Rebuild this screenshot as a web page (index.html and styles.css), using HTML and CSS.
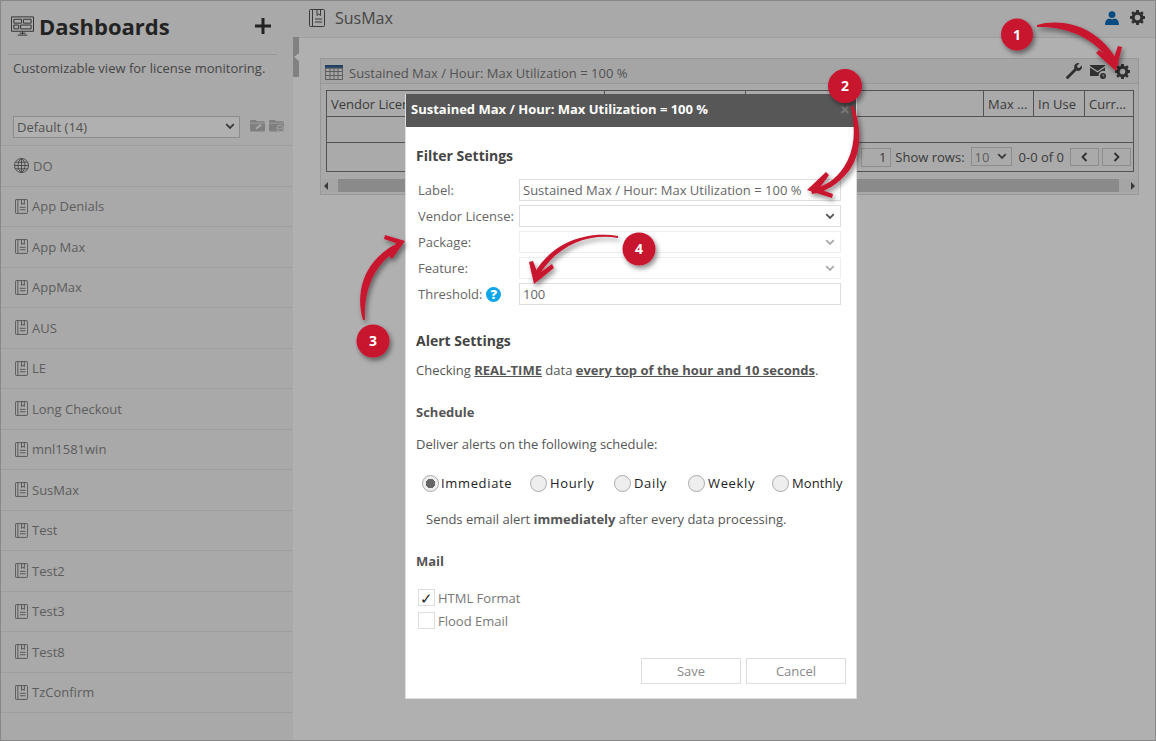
FILE: index.html
```html
<!DOCTYPE html>
<html lang="en">
<head>
<meta charset="utf-8">
<title>SusMax</title>
<link rel="stylesheet" href="styles.css">
</head>
<body>
<svg class="defs" width="0" height="0" aria-hidden="true">
  <symbol id="i-report" viewBox="0 0 16 18">
    <path d="M3.500.5h11a1 1 0 0 1 1 1v15a1 1 0 0 1-1 1h-11zM3.500.5h-2a1 1 0 0 0-1 1v15a1 1 0 0 0 1 1h2" fill="none" stroke="currentColor"/>
    <path d="M8 .5v6l1.750-1.500 1.750 1.500v-6" fill="none" stroke="currentColor"/>
    <path d="M6 10h7M6 13h7" stroke="currentColor" fill="none"/>
  </symbol>
  <symbol id="i-gear" viewBox="0 0 16 16">
    <path fill="currentColor" fill-rule="evenodd" d="M6.600 0h2.800l.4 2.100 1.300.55L12.900 1.400l1.700 1.700-1.250 1.800.55 1.300 2.100.4v2.800l-2.100.4-.55 1.300 1.250 1.800-1.700 1.700-1.800-1.250-1.300.55-.4 2.100H6.600l-.4-2.100-1.300-.55-1.800 1.250-1.700-1.700 1.250-1.800-.55-1.300L0 9.400V6.600l2.100-.4.550-1.300L1.400 3.100l1.700-1.700 1.800 1.250 1.300-.55zM8 5a3 3 0 1 0 0 6 3 3 0 0 0 0-6z"/>
  </symbol>
  <symbol id="i-chev" viewBox="0 0 10 7">
    <path d="M1.200 1.200 5 5l3.800-3.800" fill="none" stroke="currentColor" stroke-width="1.800"/>
  </symbol>
</svg>

<div class="app">
  <aside class="sidebar">
    <header class="side-head">
      <svg class="dash-icon" viewBox="0 0 24 20"><path d="M.5.500h23v15H.5zM3 3h8v4H3zM13 3h8v4h-8zM3 9h5v4H3zM10 9h11v4H10zM9 17.500h6M7 19.500h10M12 15.500v3" fill="none" stroke="currentColor"/></svg>
      <h1 class="side-title">Dashboards</h1>
      <svg class="plus" viewBox="0 0 16 16"><path d="M8 0v16M0 8h16" stroke="currentColor" stroke-width="3"/></svg>
    </header>
    <p class="side-desc">Customizable view for license monitoring.</p>
    <div class="side-filter">
      <div class="side-select"><span>Default (14)</span><svg class="chev"><use href="#i-chev"/></svg></div>
      <svg class="folder" viewBox="0 0 16 13"><path fill="currentColor" d="M0 1.500 1 .5h5l1.500 1.500H15l1 1v9l-1 1H1l-1-1z"/><path d="M0 4h16" stroke="#f5f5f5" stroke-width=".8"/><path d="M6 10.500l.5-2L11 5l1.500 1.500L8 10z" fill="#f5f5f5"/></svg>
      <svg class="folder" viewBox="0 0 16 13"><path fill="currentColor" d="M0 1.500 1 .5h5l1.500 1.500H15l1 1v9l-1 1H1l-1-1z"/><path d="M0 4h16" stroke="#f5f5f5" stroke-width=".8"/><circle cx="12" cy="9.500" r="3.500" fill="currentColor" stroke="#f5f5f5"/><path d="M10 9.500h4" stroke="#f5f5f5"/></svg>
    </div>
    <nav class="side-list">
      <a class="side-item"><svg class="item-icon" viewBox="0 0 16 16"><circle cx="8" cy="8" r="7.500" fill="none" stroke="currentColor"/><path d="M.5 8h15M1.500 4.500h13M1.500 11.500h13M8 .5v15M8 .5C3 4 3 12 8 15.500M8 .5c5 3.500 5 11.500 0 15" fill="none" stroke="currentColor"/></svg>DO</a>
      <a class="side-item"><svg class="item-icon rep"><use href="#i-report"/></svg>App Denials</a>
      <a class="side-item"><svg class="item-icon rep"><use href="#i-report"/></svg>App Max</a>
      <a class="side-item"><svg class="item-icon rep"><use href="#i-report"/></svg>AppMax</a>
      <a class="side-item"><svg class="item-icon rep"><use href="#i-report"/></svg>AUS</a>
      <a class="side-item"><svg class="item-icon rep"><use href="#i-report"/></svg>LE</a>
      <a class="side-item"><svg class="item-icon rep"><use href="#i-report"/></svg>Long Checkout</a>
      <a class="side-item"><svg class="item-icon rep"><use href="#i-report"/></svg>mnl1581win</a>
      <a class="side-item"><svg class="item-icon rep"><use href="#i-report"/></svg>SusMax</a>
      <a class="side-item"><svg class="item-icon rep"><use href="#i-report"/></svg>Test</a>
      <a class="side-item"><svg class="item-icon rep"><use href="#i-report"/></svg>Test2</a>
      <a class="side-item"><svg class="item-icon rep"><use href="#i-report"/></svg>Test3</a>
      <a class="side-item"><svg class="item-icon rep"><use href="#i-report"/></svg>Test8</a>
      <a class="side-item"><svg class="item-icon rep"><use href="#i-report"/></svg>TzConfirm</a>
    </nav>
  </aside>
  <div class="splitter"><div class="split-handle"><i class="split-arrow"></i></div></div>
  <main class="main">
    <header class="main-head">
      <svg class="main-icon"><use href="#i-report"/></svg>
      <h2 class="main-title">SusMax</h2>
      <svg class="user-icon" viewBox="0 0 14 14"><circle cx="7" cy="3.600" r="3.400" fill="currentColor"/><path fill="currentColor" d="M0 14c0-4 1.500-6 4-6.500 1.800 1 4.200 1 6 0 2.500.5 4 2.500 4 6.500z"/></svg>
      <svg class="gear-icon"><use href="#i-gear"/></svg>
    </header>
    <div class="content">
      <section class="panel">
        <header class="panel-head">
          <svg class="table-icon" viewBox="0 0 18 15"><path d="M0 0h18v3.500H0z" fill="#2f5f8f"/><path d="M.5 3h17v11.500H.5zM.5 6.500h17M.5 10.500h17M5 3v11.500M9 3v11.500M13 3v11.500" fill="none" stroke="#888"/></svg>
          <span class="panel-title">Sustained Max / Hour: Max Utilization = 100 %</span>
          <svg class="tool wrench" viewBox="0 0 16 16"><path fill="currentColor" d="M12 0a4 4 0 0 1 1.500.3L11 2.800l.4 1.800 1.800.4L15.700 2.500A4 4 0 0 1 10.500 7.600L2.500 15.600a1.400 1.400 0 0 1-2-2L8.500 5.500A4 4 0 0 1 12 0z"/></svg>
          <svg class="tool" viewBox="0 0 16 15"><path fill="currentColor" d="M0 1h15v1L7.500 7 0 2zM0 3.500l7.500 5 7.500-5V7a5 5 0 0 0-6.500 5H0z"/><circle cx="13" cy="12" r="3" fill="currentColor"/><path d="M13 10.500V12h1.300" stroke="#f0f0f0" fill="none" stroke-width=".8"/></svg>
          <svg class="tool gear-sm"><use href="#i-gear"/></svg>
        </header>
        <div class="grid-wrap">
          <div class="grid-row grid-head">
            <span class="col c1">Vendor Licen</span><span class="col c2"></span><span class="col c3"></span>
            <span class="col c4">Max ...</span><span class="col c5">In Use</span><span class="col c6">Curr...</span>
          </div>
          <div class="grid-row grid-empty"></div>
          <div class="grid-foot">
            <span class="page-box">1</span>
            <span class="foot-label">Show rows:</span>
            <span class="rows-box">10<svg class="chev"><use href="#i-chev"/></svg></span>
            <span class="foot-count">0-0 of 0</span>
            <span class="page-btn"><svg viewBox="0 0 7 10"><path d="M5.500 1 1.500 5l4 4" fill="none" stroke="currentColor" stroke-width="1.800"/></svg></span>
            <span class="page-btn"><svg viewBox="0 0 7 10"><path d="M1.500 1l4 4-4 4" fill="none" stroke="currentColor" stroke-width="1.800"/></svg></span>
          </div>
        </div>
        <div class="hscroll">
          <i class="tri-left"></i>
          <div class="thumb"></div>
          <i class="tri-right"></i>
        </div>
      </section>
    </div>
  </main>
  <div class="overlay"></div>

  <div class="modal">
    <header class="modal-head">
      <span class="modal-title">Sustained Max / Hour: Max Utilization = 100 %</span>
      <span class="modal-close">×</span>
    </header>
    <div class="modal-body">
      <h3 class="section-title">Filter Settings</h3>
      <div class="form">
        <label class="f-label">Label:</label><div class="f-input">Sustained Max / Hour: Max Utilization = 100 %</div>
        <label class="f-label">Vendor License:</label><div class="f-input f-select"><svg class="chev"><use href="#i-chev"/></svg></div>
        <label class="f-label">Package:</label><div class="f-input f-select off"><svg class="chev"><use href="#i-chev"/></svg></div>
        <label class="f-label">Feature:</label><div class="f-input f-select off"><svg class="chev"><use href="#i-chev"/></svg></div>
        <label class="f-label">Threshold: <span class="help">?</span></label><div class="f-input">100</div>
      </div>
      <h3 class="section-title alert">Alert Settings</h3>
      <p class="check-line">Checking <b><u>REAL-TIME</u></b> data <b><u>every top of the hour and 10 seconds</u></b>.</p>
      <h4 class="sub-title sched">Schedule</h4>
      <p class="deliver">Deliver alerts on the following schedule:</p>
      <div class="radios">
        <span class="radio r1 on"><i></i>Immediate</span>
        <span class="radio r2"><i></i>Hourly</span>
        <span class="radio r3"><i></i>Daily</span>
        <span class="radio r4"><i></i>Weekly</span>
        <span class="radio r5"><i></i>Monthly</span>
      </div>
      <p class="sends">Sends email alert <b>immediately</b> after every data processing.</p>
      <h4 class="sub-title mail">Mail</h4>
      <div class="checks">
        <span class="check"><i>✓</i>HTML Format</span>
        <span class="check"><i></i>Flood Email</span>
      </div>
      <div class="actions">
        <span class="btn">Save</span>
        <span class="btn">Cancel</span>
      </div>
    </div>
  </div>

  <svg class="notes" viewBox="0 0 1156 741">
    <defs>
      <filter id="sh" x="-30%" y="-30%" width="170%" height="170%"><feDropShadow dx="2" dy="3" stdDeviation="2.500" flood-color="#000" flood-opacity=".45"/></filter>
    </defs>
    <g filter="url(#sh)" fill="#c8142f">
      <path d="M1037 25C1062 18 1099 25 1119 64L1113 67C1096 35 1062 26 1037 27z"/>
      <path d="M1116 71 1096 53 1099 50 1113 60 1118 46 1122 47z"/>
      <path d="M853 105C863 130 861 156 848 172 838 184 826 192 812 194L811 189C825 187 836 179 844 167 855 150 856 130 851 107z"/>
      <path d="M807 190 826 172 829 175 819 189 833 194 832 198z"/>
      <path d="M363 320C356 295 361 264 394 245L397 250C370 268 364 295 365 320z"/>
      <path d="M405 241 385 235 384 239 396 243 389 256 392 259z"/>
      <path d="M618 238C590 233 557 244 538 277L534 274C553 240 590 231 618 236z"/>
      <path d="M534 284 529 262 533 261 538 274 552 264 554 268z"/>
      <circle cx="1017" cy="34.500" r="16"/>
      <circle cx="845" cy="86" r="17"/>
      <circle cx="373" cy="341" r="16.500"/>
      <circle cx="639" cy="249" r="16.500"/>
    </g>
    <g class="note-num">
      <text x="1017" y="40">1</text>
      <text x="845" y="91">2</text>
      <text x="373" y="346">3</text>
      <text x="639" y="254">4</text>
    </g>
  </svg>
</div>
</body>
</html>
```

FILE: styles.css
```css
* { box-sizing: border-box; }
html, body { margin: 0; padding: 0; }
body { width: 1156px; height: 741px; overflow: hidden; font: 13px "Open Sans", "Liberation Sans", sans-serif; color: #666; background: #fff; }
.defs { position: absolute; }
h1, h2, h3, h4, p { margin: 0; }

.app { position: relative; display: flex; width: 1156px; height: 741px; border: 1px solid #888; overflow: hidden; }

.chev { width: 10px; height: 7px; color: #555; flex: none; }

/* sidebar */
.sidebar { width: 292px; flex: none; background: #f5f5f5; display: flex; flex-direction: column; }
.side-head { display: flex; align-items: center; height: 54px; margin: 0 16px 0 7px; padding: 0 3px 3px; border-bottom: 1px solid #ddd; }
.dash-icon { width: 23px; height: 20px; color: #444; margin-right: 5px; flex: none; }
.side-title { font-size: 22px; font-weight: 700; color: #333; line-height: 50px; flex: 1; }
.plus { width: 16px; height: 16px; color: #333; margin: 0 3px 0 0; }
.side-desc { padding: 4px 0 0 12px; line-height: 19px; color: #666; }
.side-filter { display: flex; align-items: center; margin-top: 37px; padding-left: 12px; height: 23px; }
.side-select { display: flex; align-items: center; justify-content: space-between; width: 227px; height: 22px; padding: 0 4px 0 3px; border: 1px solid #ccc; background: #fff; color: #777; }
.folder { width: 15px; height: 13px; color: #b8b8b8; margin: -2px 0 0 4px; }
.side-select + .folder { margin-left: 10px; }
.side-list { margin-top: 7px; border-top: 1px solid #e4e4e4; }
.side-item { display: flex; align-items: center; height: 40.5px; padding-left: 13px; border-bottom: 1px solid #e4e4e4; color: #888; }
.item-icon { width: 15px; height: 15px; margin-right: 4px; color: #666; flex: none; }
.item-icon.rep { width: 13px; height: 15px; margin: 0 4px 0 1px; }

/* splitter */
.splitter { width: 6px; flex: none; background: linear-gradient(#f5f5f5 36px, #fff 36px); padding-top: 36px; }
.split-handle { position: relative; height: 40px; background: #bbb; display: flex; align-items: center; justify-content: center; }
.split-arrow { width: 0; height: 0; border: 4px solid transparent; border-right: 5px solid #fff; border-left: 0; }

/* main */
.main { flex: 1; min-width: 0; background: #fff; display: flex; flex-direction: column; }
.main-head { display: flex; align-items: center; height: 37px; padding: 0 10px; background: #f5f5f5; border-bottom: 1px solid #e4e4e4; }
.main-icon { width: 16px; height: 18px; color: #555; margin: -3px 10px 0 0; }
.main-title { flex: 1; font-size: 16px; font-weight: 400; color: #666; margin-top: -3px; }
.user-icon { width: 14px; height: 14px; color: #0a6ebd; margin: -2px 11px 0 0; }
.gear-icon { width: 15px; height: 15px; color: #444; margin-top: -3px; }

.content { padding: 20px 16px 0 21px; }
.panel { height: 137px; border: 1px solid #ddd; background: #f5f5f5; }
.panel-head { display: flex; align-items: center; height: 25px; padding: 3px 8px 0 4px; background: #f0f0f0; border-bottom: 1px solid #ddd; }
.table-icon { width: 18px; height: 15px; margin-right: 6px; }
.panel-title { flex: 1; color: #777; }
.tool { width: 16px; height: 15px; color: #444; margin: -3px 0 0 8px; }
.wrench { height: 16px; }
.gear-sm { width: 15px; height: 15px; margin-left: 9px; }

.grid-wrap { margin: 6px 4px 0 5px; border: 1px solid #777; background: #f7f7f7; height: 82px; display: flex; flex-direction: column; }
.grid-row { display: flex; flex: none; height: 26px; border-bottom: 1px solid #777; }
.col { padding: 4px; line-height: 18px; border-right: 1px solid #777; color: #555; white-space: nowrap; overflow: hidden; }
.c1 { width: 278px; } .c2 { width: 141px; } .c3 { width: 238px; } .c4 { width: 50px; } .c5 { width: 51px; } .c6 { flex: 1; border-right: 0; }
.grid-foot { flex: 1; display: flex; align-items: center; justify-content: flex-end; padding-right: 2px; color: #555; }
.page-box { width: 30px; height: 19px; border: 1px solid #ccc; text-align: right; padding-right: 4px; line-height: 17px; }
.foot-label { margin: 0 6px 0 4px; }
.rows-box { display: flex; align-items: center; justify-content: space-between; width: 41px; height: 19px; padding: 0 4px 0 3px; border: 1px solid #ccc; color: #888; margin-top: -1px; }
.foot-count { margin: 0 6px 0 7px; }
.page-btn { display: flex; align-items: center; justify-content: center; width: 29px; height: 18px; border: 1px solid #ccc; color: #444; }
.page-btn + .page-btn { margin-left: 3px; }
.page-btn svg { width: 7px; height: 10px; }
.hscroll { display: flex; align-items: center; height: 13px; margin: 7px 1px 0; background: #f0f0f0; }
.thumb { flex: 1; height: 13px; margin: 0 10px 0 8px; background: #c8c8c8; }
.tri-left, .tri-right { width: 0; height: 0; border: 4px solid transparent; flex: none; margin: 0 2px; }
.tri-left { border-right: 4px solid #555; border-left: 0; }
.tri-right { border-left: 4px solid #555; border-right: 0; }

.overlay { position: absolute; inset: -1px; background: rgba(0, 0, 0, .31); }

/* modal */
.modal { position: absolute; left: 404px; top: 93px; width: 452px; height: 605px; background: #fff; border: 1px solid #ddd; border-width: 0 1px 1px; }
.modal-head { display: flex; align-items: center; justify-content: space-between; height: 33px; padding: 0 6px 4px 5px; background: #575757; color: #fff; }
.modal-title { font-weight: 700; }
.modal-close { font-size: 18px; color: #777; font-weight: 700; line-height: 1; }
.modal-body { padding: 0 15px 0 10px; }
.section-title { font-size: 14px; font-weight: 700; color: #444; line-height: 19px; padding-top: 19px; }
.form { display: grid; grid-template-columns: 101px 322px; grid-auto-rows: 22px; row-gap: 4px; margin-top: 14px; padding-left: 2px; }
.f-label { line-height: 22px; color: #666; display: flex; align-items: center; gap: 4px; white-space: nowrap; }
.f-input { height: 22px; border: 1px solid #ddd; padding: 0 3px; line-height: 20px; color: #666; background: #fff; }
.f-select { display: flex; align-items: center; justify-content: flex-end; padding-right: 5px; }
.f-select.off .chev { color: #aaa; }
.f-select.off { border-color: #eee; }
.help { display: inline-flex; align-items: center; justify-content: center; width: 15px; height: 15px; border-radius: 50%; background: #0ea5e9; color: #fff; font-weight: 800; font-size: 13px; line-height: 1; }
.alert { padding-top: 26px; }
.check-line { margin-top: 11px; line-height: 19px; color: #555; }
.sub-title { font-size: 13px; font-weight: 700; color: #555; line-height: 18px; }
.sched { margin-top: 23px; }
.deliver { margin-top: 14px; line-height: 18px; color: #555; }
.radios { display: flex; margin: 21px 0 0 6px; height: 18px; color: #222; letter-spacing: .65px; font-size: 13px; }
.radio { display: flex; align-items: center; gap: 3px; line-height: 18px; flex: none; }
.radio i { width: 17px; height: 17px; border: 1px solid #aaa; border-radius: 50%; background: #eee; display: block; flex: none; }
.radio.on { gap: 2px; }
.radio.on i { background: radial-gradient(circle, #666 0 4.5px, #eee 5px); }
.r1 { width: 108px; } .r2 { width: 84px; } .r3 { width: 74px; } .r4 { width: 84px; } .r5 { letter-spacing: .1px; }
.sends { margin: 18px 0 0 10px; line-height: 18px; color: #555; }
.mail { margin-top: 24px; }
.checks { display: flex; flex-direction: column; gap: 6px; margin: 19px 0 0 2px; color: #777; }
.check { display: flex; align-items: center; gap: 3px; height: 17px; }
.check i { width: 17px; height: 17px; border: 1px solid #ddd; display: flex; align-items: center; justify-content: center; font-style: normal; color: #222; font-size: 15px; }
.actions { display: flex; justify-content: flex-end; gap: 5px; margin: 29px -5px 0 0; }
.btn { width: 100px; height: 26px; border: 1px solid #ddd; text-align: center; line-height: 24px; color: #888; }

.notes { position: absolute; left: -1px; top: -1px; width: 1156px; height: 741px; pointer-events: none; }
.note-num text { font: 700 14px "Open Sans", sans-serif; fill: #fff; text-anchor: middle; }
```
